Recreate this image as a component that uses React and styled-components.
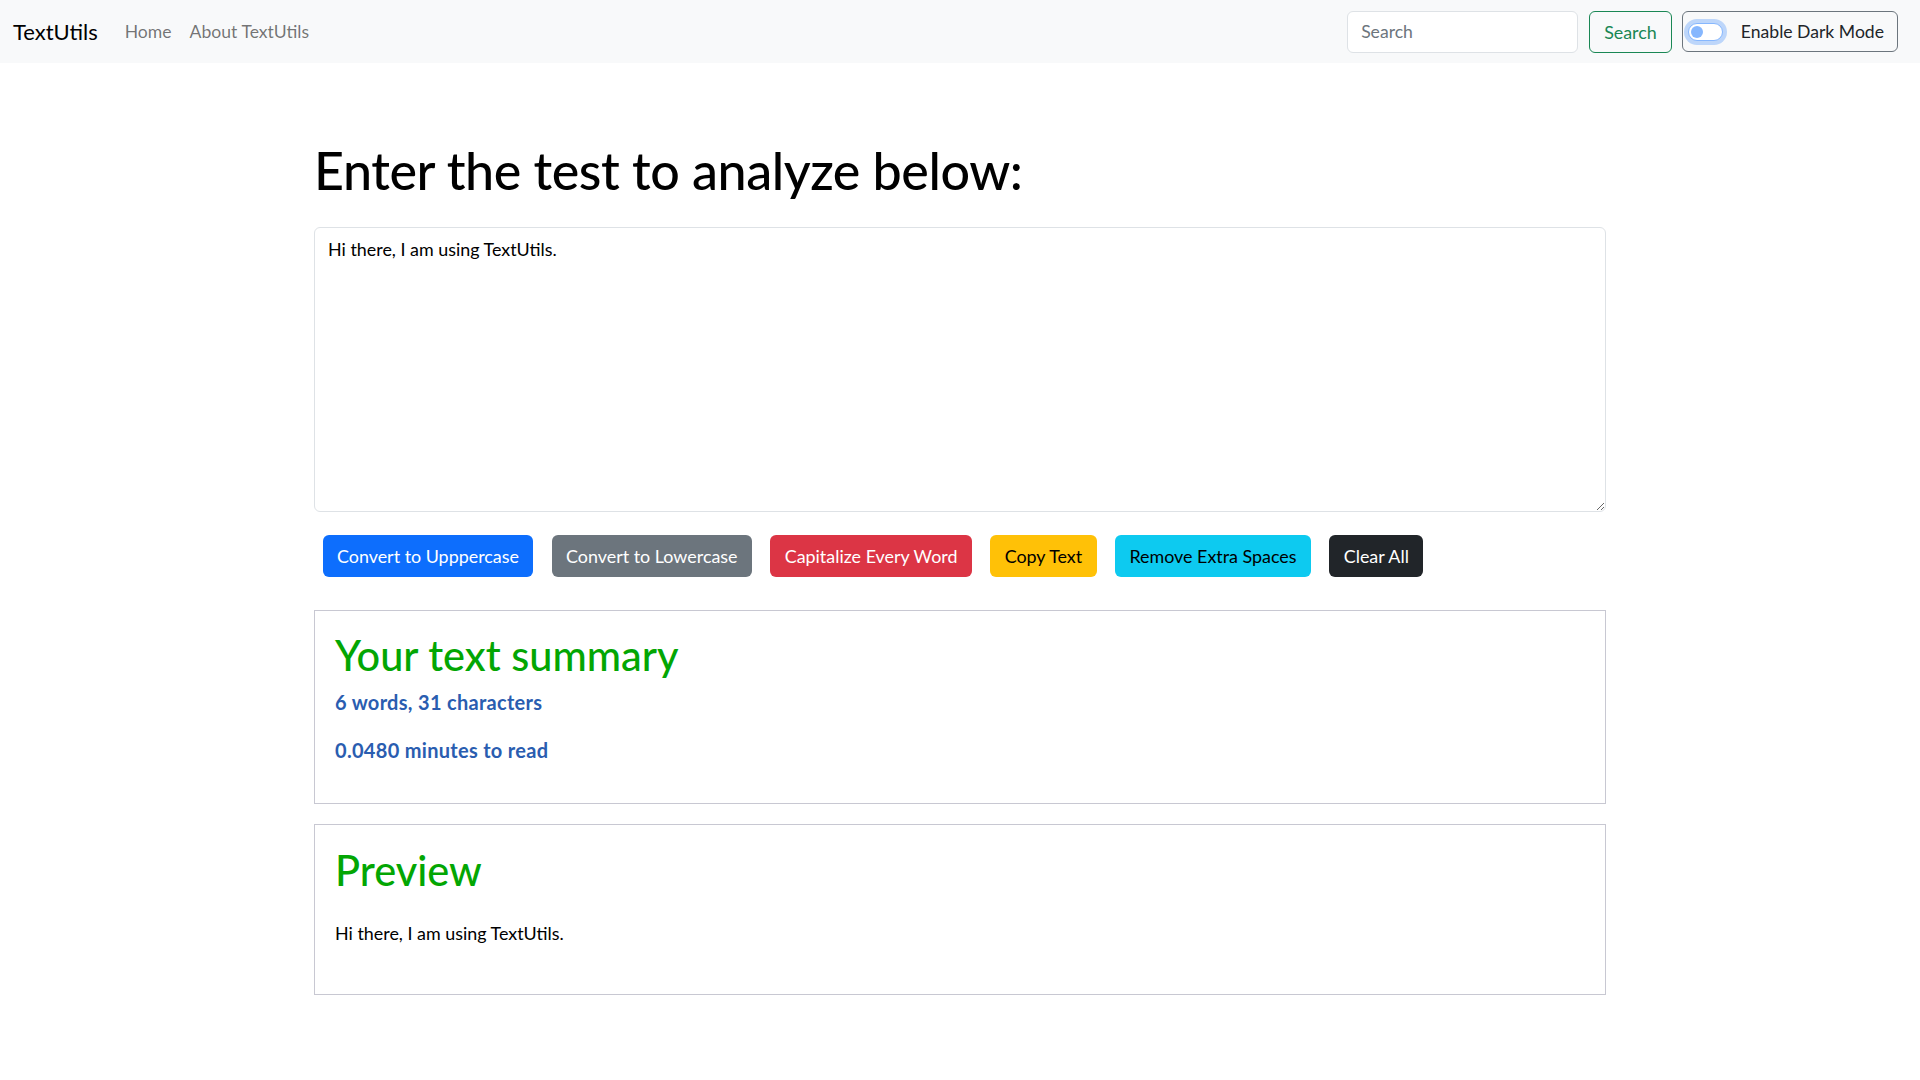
import React, { useState } from "react";
import styled, { createGlobalStyle } from "styled-components";

const GlobalStyle = createGlobalStyle`
  * { box-sizing: border-box; }
  body {
    margin: 0;
    background: #fff;
    color: #212529;
    font-family: Lato, "Open Sans", "Liberation Sans", sans-serif;
    font-size: 17.9px;
  }
`;

const Navbar = styled.nav`
  display: flex;
  align-items: center;
  height: 63px;
  padding: 0 22px 0 13px;
  background: #f8f9fa;
`;

const Brand = styled.a`
  font-size: 22px;
  line-height: 1.5;
  color: #000;
  text-decoration: none;
  margin-right: 18px;
`;

const NavLink = styled.a`
  font-size: 17.6px;
  line-height: 1.5;
  padding: 2px 9px 0;
  color: rgba(0, 0, 0, 0.55);
  text-decoration: none;
`;

const NavRight = styled.div`
  margin-left: auto;
  display: flex;
  align-items: center;
`;

const SearchInput = styled.input`
  width: 231px;
  height: 42px;
  padding: 0 13px;
  border: 1px solid #dee2e6;
  border-radius: 6px;
  font: inherit;
  font-size: 17.6px;
  color: #212529;
  background: #fff;
  &::placeholder { color: #6c757d; }
`;

const OutlineButton = styled.button`
  height: 42px;
  margin-left: 11px;
  padding: 0 14px;
  border: 1px solid #198754;
  border-radius: 6px;
  background: transparent;
  color: #198754;
  font: inherit;
  font-size: 17.9px;
`;

const ModeBox = styled.label`
  display: flex;
  align-items: center;
  height: 41px;
  margin-left: 10px;
  padding: 0 13px 0 5px;
  border: 1px solid #6c757d;
  border-radius: 6px;
  color: #212529;
  font-size: 17.6px;
  cursor: pointer;
`;

const Switch = styled.span`
  position: relative;
  width: 35px;
  height: 18px;
  margin-right: 18px;
  border: 1px solid #86b7fe;
  border-radius: 9px;
  background: #fff;
  box-shadow: 0 0 0 4px rgba(13, 110, 253, 0.25);

  &::after {
    content: "";
    position: absolute;
    top: 2px;
    left: ${(p) => (p.$on ? "19px" : "2px")};
    width: 12px;
    height: 12px;
    border-radius: 50%;
    background: #86b7fe;
  }
`;

const Main = styled.main`
  width: 1292px;
  margin: 0 auto;
`;

const Title = styled.h1`
  margin: 75px 0 25px;
  font-size: 52px;
  line-height: 64px;
  letter-spacing: -0.45px;
  font-weight: 500;
  color: #000;
`;

const TextBox = styled.textarea`
  display: block;
  width: 100%;
  height: 285px;
  padding: 8px 13px 6px;
  border: 1px solid #dee2e6;
  border-radius: 6px;
  font: inherit;
  font-size: 17.9px;
  line-height: 26.4px;
  color: #000;
  outline: none;
`;

const ButtonRow = styled.div`
  display: flex;
  gap: 18.4px;
  margin: 23px 0 33px;
  padding-left: 8.6px;
`;

const palette = {
  primary: ["#0d6efd", "#fff"],
  secondary: ["#6c757d", "#fff"],
  danger: ["#dc3545", "#fff"],
  warning: ["#ffc107", "#000"],
  info: ["#0dcaf0", "#000"],
  dark: ["#212529", "#fff"],
};

const ActionButton = styled.button`
  height: 42px;
  padding: 0 14.4px;
  border: none;
  border-radius: 6px;
  background: ${(p) => palette[p.$variant][0]};
  color: ${(p) => palette[p.$variant][1]};
  font: inherit;
  font-size: 17.9px;
  cursor: pointer;
`;

const Card = styled.section`
  border: 1px solid #c8c8d2;
  padding: ${(p) => p.$top}px 20px ${(p) => p.$bottom}px;
  margin-bottom: 20px;
`;

const CardTitle = styled.h2`
  margin: 0;
  font-size: 41.5px;
  line-height: 48px;
  font-weight: 500;
  color: #03a603;
`;

const Stat = styled.p`
  margin: ${(p) => p.$top}px 0 0;
  font-size: 20px;
  line-height: 26px;
  letter-spacing: 0.3px;
  font-weight: 700;
  color: #2a5db0;
`;

const PreviewText = styled.p`
  margin: 25.5px 0 0;
  font-size: 17.9px;
  line-height: 26px;
  color: #000;
`;

export default function App() {
  const [text, setText] = useState("Hi there, I am using TextUtils.");
  const [dark, setDark] = useState(false);

  const words = text.split(/\s+/).filter((w) => w.length).length;
  const minutes = (0.008 * words).toFixed(4);

  return (
    <>
      <GlobalStyle />
      <Navbar>
        <Brand href="#">TextUtils</Brand>
        <NavLink href="#">Home</NavLink>
        <NavLink href="#">About TextUtils</NavLink>
        <NavRight>
          <SearchInput placeholder="Search" />
          <OutlineButton>Search</OutlineButton>
          <ModeBox onClick={() => setDark(!dark)}>
            <Switch $on={dark} />
            Enable Dark Mode
          </ModeBox>
        </NavRight>
      </Navbar>

      <Main>
        <Title>Enter the test to analyze below:</Title>
        <TextBox value={text} onChange={(e) => setText(e.target.value)} rows={8} />

        <ButtonRow>
          <ActionButton $variant="primary" onClick={() => setText(text.toUpperCase())}>Convert to Upppercase</ActionButton>
          <ActionButton $variant="secondary" onClick={() => setText(text.toLowerCase())}>Convert to Lowercase</ActionButton>
          <ActionButton $variant="danger">Capitalize Every Word</ActionButton>
          <ActionButton $variant="warning">Copy Text</ActionButton>
          <ActionButton $variant="info" onClick={() => setText(text.split(/[ ]+/).join(" "))}>Remove Extra Spaces</ActionButton>
          <ActionButton $variant="dark" onClick={() => setText("")}>Clear All</ActionButton>
        </ButtonRow>

        <Card $top={20} $bottom={40}>
          <CardTitle>Your text summary</CardTitle>
          <Stat $top={10}>{words} words, {text.length} characters</Stat>
          <Stat $top={22}>{minutes} minutes to read</Stat>
        </Card>

        <Card $top={21} $bottom={48}>
          <CardTitle>Preview</CardTitle>
          <PreviewText>{text}</PreviewText>
        </Card>
      </Main>
    </>
  );
}
